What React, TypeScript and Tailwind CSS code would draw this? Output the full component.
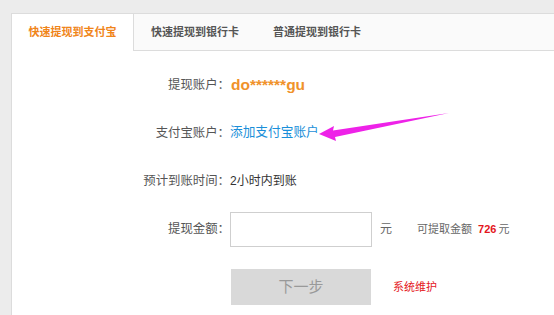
const FONT = "font-['Liberation_Sans','Noto_Sans_CJK_SC',sans-serif]";

const TABS = ["快速提现到支付宝", "快速提现到银行卡", "普通提现到银行卡"];

function Row({ label, children, className = "h-[48px]" }: { label: string; children: React.ReactNode; className?: string }) {
  return (
    <div className={`flex items-center ${className}`}>
      <div className="w-[218px] shrink-0 text-right text-[12.4px] text-[#555]">{label}：</div>
      <div className="flex items-center">{children}</div>
    </div>
  );
}

export default function App() {
  return (
    <div className={`h-[315px] w-[554px] overflow-hidden bg-[#ececec] pl-[11px] pt-[13px] ${FONT}`}>
      <div className="relative h-[400px] border-l border-t border-[#dcdcdc] bg-white">
        <div className="flex h-[37px] border-b border-[#dcdcdc] bg-[#fafafa]">
          {TABS.map((tab, i) => (
            <div
              key={tab}
              className={
                i === 0
                  ? "-mb-px flex h-[37px] w-[122px] items-center justify-center border-r border-[#dcdcdc] bg-white text-[11px] font-bold text-[#f08519]"
                  : "flex w-[122px] items-center justify-center text-[11px] font-bold text-[#555]"
              }
            >
              {tab}
            </div>
          ))}
        </div>

        <div className="pt-[10px]">
          <Row label="提现账户">
            <span className="ml-[1px] text-[15.5px] font-bold text-[#f0922a]">do******gu</span>
          </Row>
          <Row label="支付宝账户">
            <span className="text-[12.7px] text-[#1a8fd9]">添加支付宝账户</span>
          </Row>
          <Row label="预计到账时间">
            <span className="text-[12px] text-[#333]">2小时内到账</span>
          </Row>
          <Row label="提现金额">
            <input className="h-[35px] w-[142px] border border-[#cfcfcf] bg-white outline-none" />
            <span className="ml-[8px] text-[12px] text-[#666]">元</span>
            <span className="ml-[25px] text-[11px] text-[#666]">可提取金额</span>
            <span className="ml-[6px] text-[11px] font-bold text-[#e4161c]">726</span>
            <span className="ml-[2px] text-[11px] text-[#666]">元</span>
          </Row>
          <div className="mt-[16px] flex items-center pl-[219px]">
            <button className="h-[36px] w-[140px] bg-[#d9d9d9] text-[15px] text-[#999]">下一步</button>
            <span className="ml-[22px] text-[11px] text-[#e4161c]">系统维护</span>
          </div>
        </div>

        <svg className="absolute left-0 top-0" width="554" height="315" viewBox="11 14 554 315">
          <polygon
            points="318,134 333,126 332,130.5 448,113 334,137 335,141"
            fill="#ee22e8"
          />
        </svg>
      </div>
    </div>
  );
}
